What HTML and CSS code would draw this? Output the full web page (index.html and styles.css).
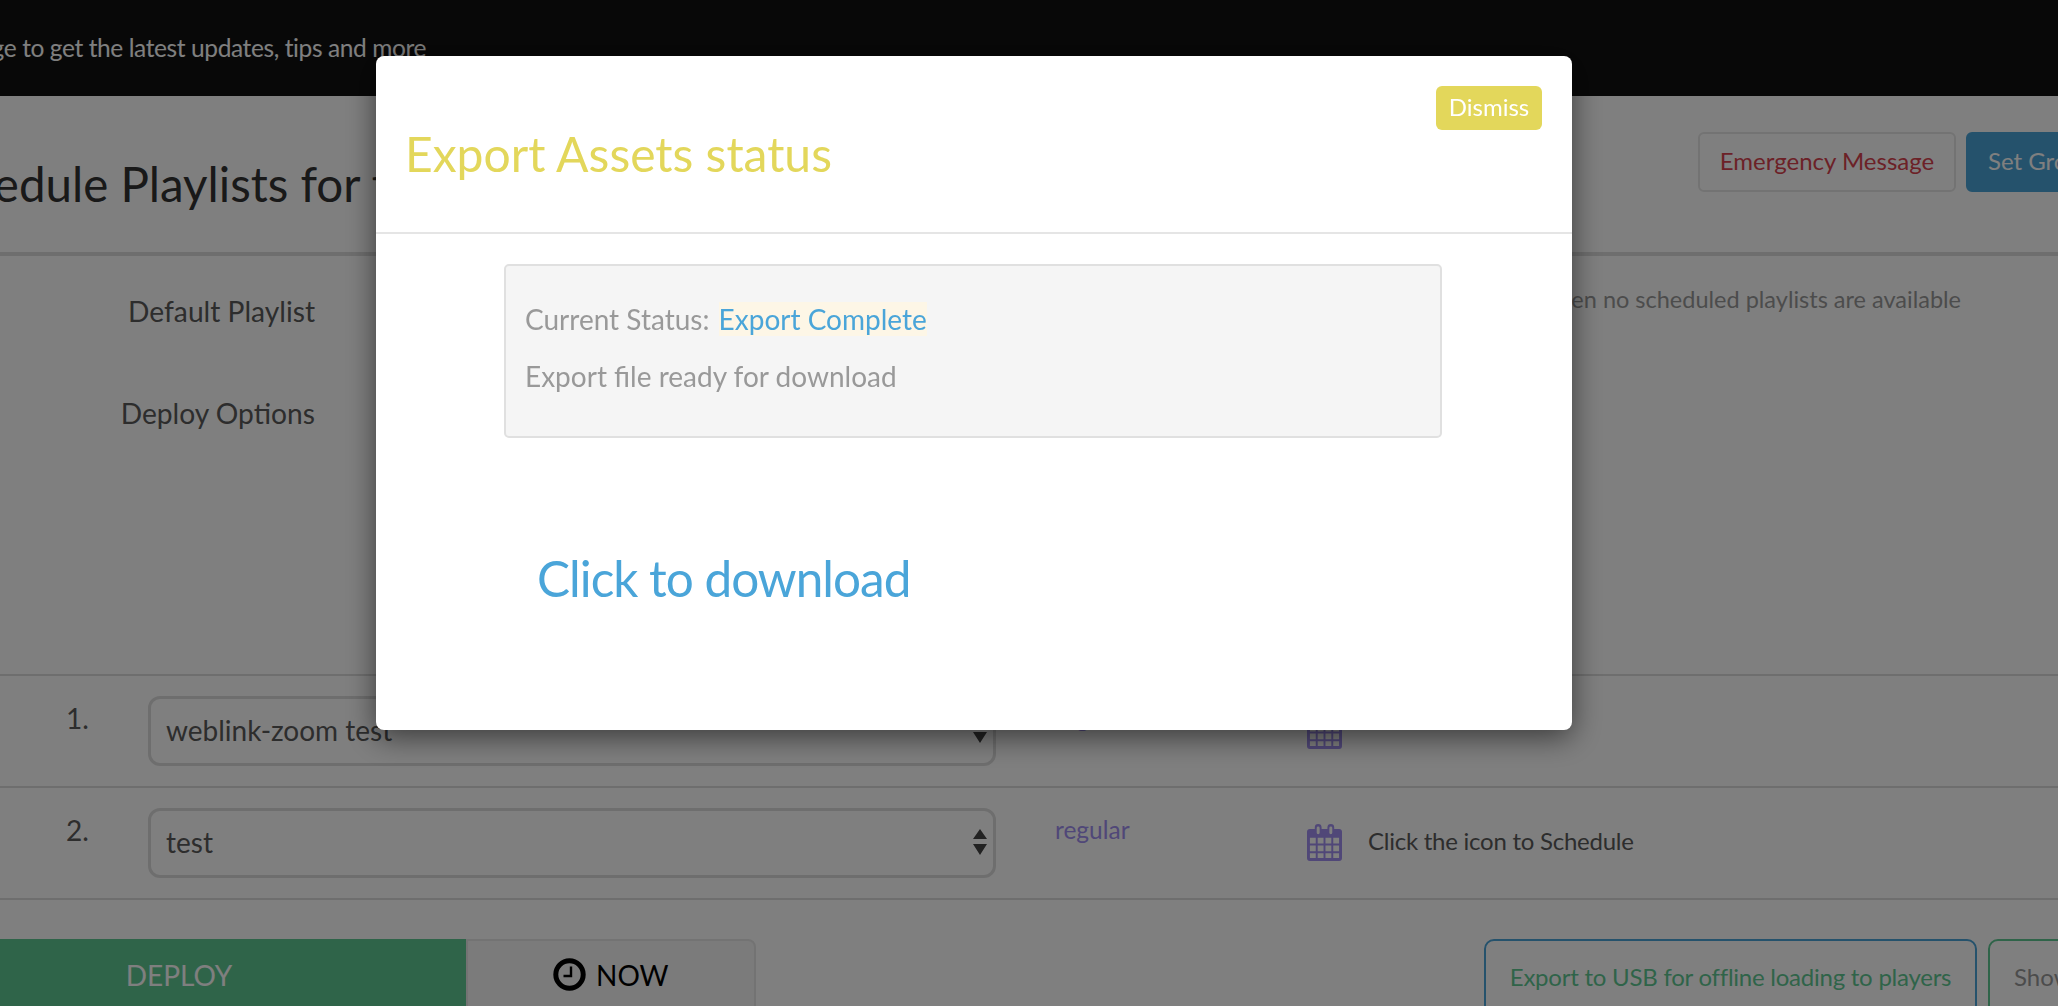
FILE: index.html
```html
<!DOCTYPE html>
<html lang="en">
<head>
<meta charset="utf-8">
<title>Schedule Playlists</title>
<link rel="stylesheet" href="styles.css">
</head>
<body>
<div class="page">
  <div class="topbar"><div class="topbar-inner"><span class="topbar-text">page to get the latest updates, tips and more</span></div></div>

  <header class="head">
    <h1 class="head-title">Schedule Playlists for the group</h1>
    <div class="head-actions">
      <button class="btn btn-emergency">Emergency Message</button>
      <button class="btn btn-primary">Set Group Default</button>
    </div>
  </header>

  <section class="settings">
    <div class="setting">
      <div class="setting-label">Default Playlist</div>
      <div class="setting-hint">This playlist is played when no scheduled playlists are available</div>
    </div>
    <div class="setting setting-deploy">
      <div class="setting-label">Deploy Options</div>
    </div>
  </section>

  <section class="plist">
    <div class="plist-row">
      <div class="plist-num">1.</div>
      <div class="select"><span>weblink-zoom test</span>
        <svg class="select-arrows" viewBox="0 0 14 26"><path d="M7 0L14 10H0ZM7 26L0 15H14Z"/></svg>
      </div>
      <div class="plist-type">regular</div>
      <div class="plist-sched">
        <svg class="cal" viewBox="0 0 36 38"><use href="#cal"/></svg>
      </div>
    </div>
    <div class="plist-row">
      <div class="plist-num">2.</div>
      <div class="select"><span>test</span>
        <svg class="select-arrows" viewBox="0 0 14 26"><path d="M7 0L14 10H0ZM7 26L0 15H14Z"/></svg>
      </div>
      <div class="plist-type">regular</div>
      <div class="plist-sched">
        <svg class="cal" viewBox="0 0 36 38"><use href="#cal"/></svg>
        <span class="plist-sched-text">Click the icon to Schedule</span>
      </div>
    </div>
  </section>

  <section class="actions">
    <div class="deploy-group">
      <button class="btn-deploy">DEPLOY</button>
      <button class="btn-now">
        <svg class="clock" viewBox="0 0 33 33"><circle cx="16.5" cy="16.5" r="13.7" fill="none" stroke="currentColor" stroke-width="5"/><path d="M18 8.5V18H10.5" fill="none" stroke="currentColor" stroke-width="2.4"/></svg>
        <span>NOW</span>
      </button>
    </div>
    <div class="export-group">
      <button class="btn-export">Export to USB for offline loading to players</button>
      <button class="btn-show">Show Assets</button>
    </div>
  </section>
</div>

<svg class="defs" width="0" height="0" aria-hidden="true">
  <symbol id="cal" viewBox="0 0 36 38">
    <path fill="#a08ff0" fill-rule="evenodd" d="M3 5H8V3.5A3.5 3.5 0 0 1 15 3.5V5H21V3.5A3.5 3.5 0 0 1 28 3.5V5H33A3 3 0 0 1 36 8V35A3 3 0 0 1 33 38H3A3 3 0 0 1 0 35V8A3 3 0 0 1 3 5ZM10 4V9A1.5 1.5 0 0 0 13 9V4A1.5 1.5 0 0 0 10 4ZM23 4V9A1.5 1.5 0 0 0 26 9V4A1.5 1.5 0 0 0 23 4ZM3 14V20H9V14ZM11 14V20H17V14ZM19 14V20H25V14ZM27 14V20H33V14ZM3 22V28H9V22ZM11 22V28H17V22ZM19 22V28H25V22ZM27 22V28H33V22ZM3 30V35H9V30ZM11 30V35H17V30ZM19 30V35H25V30ZM27 30V35H33V30Z"/>
  </symbol>
</svg>

<div class="backdrop"></div>

<div class="modal">
  <div class="modal-head">
    <button class="btn-dismiss">Dismiss</button>
    <h2 class="modal-title">Export Assets status</h2>
  </div>
  <div class="modal-body">
    <div class="status-box">
      <p class="status-line">Current Status: <span class="status-value">Export Complete</span></p>
      <p class="status-line">Export file ready for download</p>
    </div>
    <a class="download" href="#">Click to download</a>
  </div>
</div>
</body>
</html>
```

FILE: styles.css
```css
* { box-sizing: border-box; }

html, body {
  margin: 0;
  height: 100%;
  overflow: hidden;
  background: #fff;
}

body {
  font-family: Lato, "Open Sans", sans-serif;
  color: #333;
}

button {
  font-family: inherit;
  cursor: pointer;
}

.page {
  width: 2400px;
  margin-left: -120px;
  height: 1006px;
  overflow: hidden;
}

.defs { display: block; height: 0; }

.topbar {
  height: 96px;
  background: #111;
  color: #fff;
  font-size: 24.5px;
  letter-spacing: -0.4px;
  line-height: 95px;
  white-space: nowrap;
}

.topbar-inner {
  width: 546px;
  display: flex;
  justify-content: flex-end;
}

.topbar-text { flex: none; }

.head {
  height: 160px;
  display: flex;
  border-bottom: 4px solid #ddd;
}

.head-title {
  margin: 60px 0 0;
  width: 1818px;
  font-size: 47.5px;
  font-weight: 400;
  line-height: 56px;
  white-space: nowrap;
  color: #333;
  text-indent: 39px;
}

.head-actions {
  display: flex;
  gap: 10px;
  padding-top: 36px;
}

.btn {
  height: 60px;
  padding-bottom: 5px;
  font-size: 24px;
  border-radius: 6px;
}

.btn-emergency {
  width: 258px;
  background: #fff;
  border: 2px solid #e6e6e6;
  color: #d9434f;
}

.btn-primary {
  width: 260px;
  background: #4aa5d9;
  border: 2px solid #4aa5d9;
  color: #fff;
  text-align: left;
  padding-left: 20px;
}

.settings {
  height: 420px;
  border-bottom: 2px solid #ddd;
}

.setting {
  display: grid;
  grid-template-columns: 435px 1646px;
  padding-top: 35px;
}

.setting-deploy { padding-top: 62px; }

.setting-label {
  font-size: 28.2px;
  line-height: 40px;
  text-align: right;
  color: #5a5a5a;
}

.setting-hint {
  font-size: 23.5px;
  line-height: 30px;
  text-align: right;
  color: #999;
  margin-top: -7px;
}

.plist-row {
  height: 112px;
  display: flex;
  border-bottom: 2px solid #ddd;
  padding-top: 20px;
}

.plist-num {
  width: 268px;
  padding: 2px 0 0 186px;
  font-size: 28px;
  line-height: 40px;
  color: #5a5a5a;
}

.select {
  width: 848px;
  height: 70px;
  display: flex;
  align-items: center;
  justify-content: space-between;
  padding: 0 6px 2px 15px;
  border: 3px solid #ddd;
  border-radius: 12px;
  font-size: 28px;
  color: #5a5a5a;
}

.select-arrows {
  width: 14px;
  height: 26px;
  fill: #444;
}

.plist-type {
  width: 252px;
  margin-left: 59px;
  padding-top: 4px;
  font-size: 24.5px;
  line-height: 36px;
  color: #a08ff0;
}

.plist-sched {
  display: flex;
  align-items: center;
  height: 69px;
  gap: 26px;
  font-size: 24px;
  letter-spacing: -0.25px;
  color: #5a5a5a;
}

.plist-sched-text { margin-bottom: 4px; }

.cal {
  width: 35px;
  height: 37px;
}

.actions {
  display: flex;
  margin-top: 39px;
}

.deploy-group {
  display: flex;
  width: 1604px;
}

.btn-deploy {
  width: 586px;
  height: 100px;
  border: 0;
  background: #5fc893;
  color: #fff;
  font-size: 28px;
  padding: 0 0 28px 12px;
}

.btn-now {
  width: 290px;
  height: 100px;
  display: flex;
  align-items: flex-start;
  gap: 10px;
  padding: 16px 0 0 85px;
  background: #f6f6f6;
  border: 2px solid #e6e6e6;
  border-radius: 0 8px 8px 0;
  color: #000;
  font-size: 28px;
  line-height: 36px;
}

.clock {
  width: 33px;
  height: 33px;
  margin-top: 1px;
}

.export-group {
  display: flex;
  gap: 11px;
}

.btn-export {
  width: 493px;
  height: 100px;
  padding: 0 0 26px;
  background: #fff;
  border: 2px solid #4aa5d9;
  border-radius: 10px;
  color: #5fc893;
  font-size: 24px;
  letter-spacing: -0.24px;
}

.btn-show {
  width: 260px;
  height: 100px;
  padding: 0 0 26px 24px;
  text-align: left;
  background: #fff;
  border: 2px solid #5fc893;
  border-radius: 10px;
  color: #999;
  font-size: 24px;
}

.backdrop {
  position: fixed;
  inset: 0;
  background: rgba(0, 0, 0, 0.5);
}

.modal {
  position: fixed;
  left: 376px;
  top: 56px;
  width: 1196px;
  height: 674px;
  background: #fff;
  border-radius: 8px;
  box-shadow: 0 7px 30px rgba(0, 0, 0, 0.55);
}

.modal-head {
  height: 178px;
  padding: 30px 30px 0 29px;
  border-bottom: 2px solid #e5e5e5;
}

.btn-dismiss {
  float: right;
  width: 106px;
  height: 44px;
  padding: 0 0 4px;
  background: #e3d75b;
  border: 0;
  border-radius: 6px;
  color: #fff;
  font-size: 24px;
}

.modal-title {
  margin: 0;
  padding-top: 38px;
  font-size: 48px;
  font-weight: 400;
  line-height: 60px;
  color: #e3d75b;
}

.modal-body {
  padding: 30px 0 0 128px;
}

.status-box {
  width: 938px;
  height: 174px;
  padding: 36px 19px 0;
  background: #f5f5f5;
  border: 2px solid #e0e0e0;
  border-radius: 5px;
}

.status-line {
  margin: 0 0 23px;
  font-size: 28px;
  line-height: 34px;
  color: #999;
}

.status-value {
  margin-left: 2px;
  background: #fdf6e6;
  color: #4aa5d9;
}

.download {
  display: block;
  margin: 110px 0 0 33px;
  font-size: 49.5px;
  letter-spacing: -1px;
  line-height: 60px;
  color: #4aa5d9;
  text-decoration: none;
}
```
